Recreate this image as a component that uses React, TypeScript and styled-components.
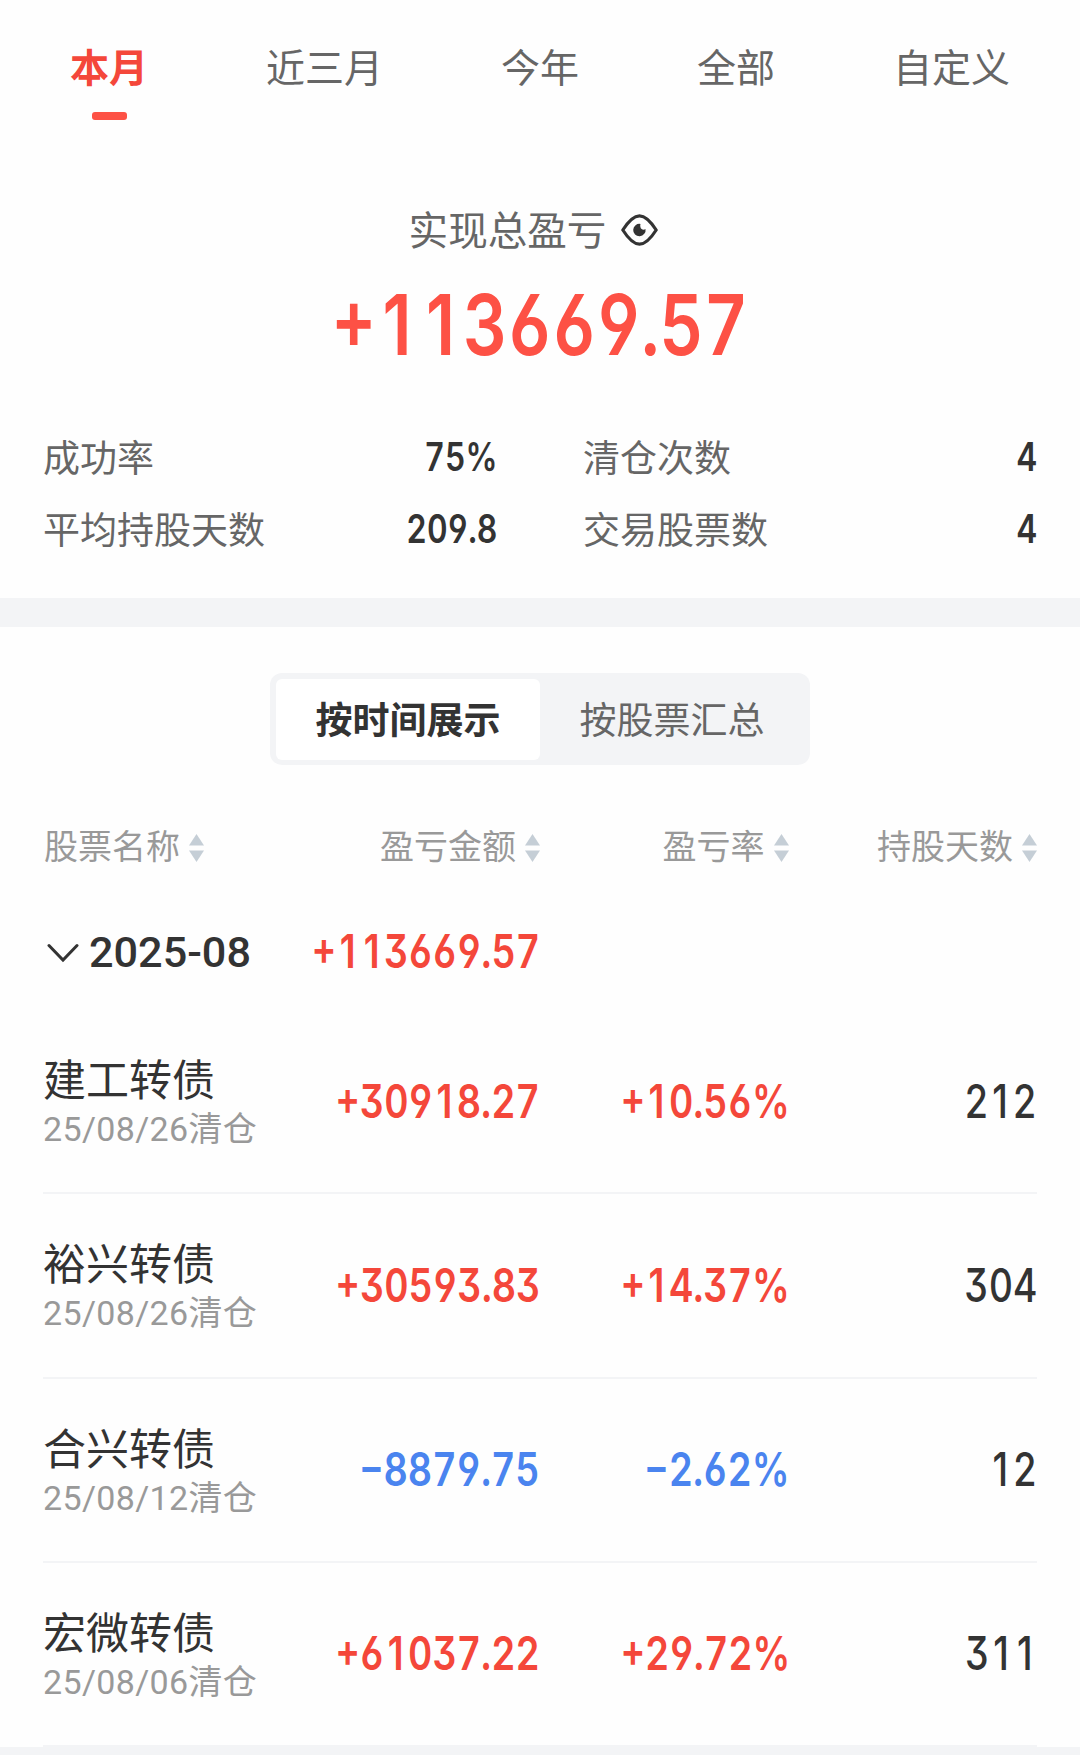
import React, { useState } from 'react';
import styled, { createGlobalStyle } from 'styled-components';

const GlobalStyle = createGlobalStyle`
  *, *::before, *::after { box-sizing: border-box; }
  body {
    margin: 0;
    background: #fefefe;
    color: #333;
    font-family: Roboto, "Noto Sans CJK SC", sans-serif;
  }
`;

const RED = '#f4473a';
const BLUE = '#4a84ef';

const Page = styled.main`
  width: 1080px;
  height: 1755px;
  overflow: hidden;
  display: flex;
  flex-direction: column;
  & > * { flex-shrink: 0; }
`;

const Tabs = styled.nav`
  display: flex;
  justify-content: space-between;
  align-items: flex-start;
  height: 190px;
  padding: 39px 70px 0;
`;

const Tab = styled.button<{ $active: boolean }>`
  display: flex;
  flex-direction: column;
  align-items: center;
  border: 0;
  padding: 0;
  background: none;
  font: inherit;
  font-size: 39px;
  line-height: 60px;
  font-weight: ${(p) => (p.$active ? 700 : 400)};
  color: ${(p) => (p.$active ? RED : '#666')};
  &::after {
    content: '';
    width: 35px;
    height: 8px;
    margin-top: 13px;
    border-radius: 3px;
    background: ${(p) => (p.$active ? '#fd5145' : 'transparent')};
  }
`;

const Total = styled.section`
  display: flex;
  flex-direction: column;
  align-items: center;
  height: 231px;
`;

const TotalLabel = styled.div`
  display: flex;
  align-items: center;
  gap: 15px;
  height: 80px;
  margin-bottom: 5px;
  padding-right: 13px;
  font-size: 39.6px;
  color: #666;
  span { margin-top: -5px; }
`;

const Num = styled.span<{ $size: number; $weight?: number; $color?: string; $flat?: boolean; $origin?: string }>`
  display: inline-block;
  font-family: Inter, Roboto, sans-serif;
  font-size: ${(p) => p.$size}px;
  line-height: 1.2;
  font-weight: ${(p) => p.$weight ?? 600};
  font-feature-settings: 'tnum', 'case', 'cv03', 'cv04'${(p) => (p.$flat ? ", 'cv09'" : '')};
  color: ${(p) => p.$color ?? '#333'};
  white-space: nowrap;
  transform: scaleX(0.818);
  transform-origin: ${(p) => p.$origin ?? 'right'} center;
`;

/* The tabular "1" has a foot; the proportional one is centred in a digit-wide cell instead. */
const One = styled.span`
  display: inline-block;
  width: 0.635em;
  padding-right: 0.02em;
  text-align: center;
  font-feature-settings: 'tnum' 0;
`;

const Digits = ({ text }: { text: string }) => (
  <>{text.split(/(1)/).map((part, i) => (part === '1' ? <One key={i}>1</One> : part))}</>
);

const Stats = styled.dl`
  display: grid;
  grid-template-columns: 453px 453px;
  grid-auto-rows: 72px;
  column-gap: 87px;
  height: 177px;
  margin: 0;
  padding: 0 43px;
`;

const Stat = styled.div`
  display: flex;
  justify-content: space-between;
  align-items: center;
`;

const StatLabel = styled.dt`
  margin-top: -2px;
  font-size: 37px;
  color: #666;
`;

const StatValue = styled.dd`
  margin: 1px -1.5px 0 0;
  display: flex;
`;

const Band = styled.div`
  height: 29px;
  background: #f3f4f6;
`;

const Segment = styled.div`
  display: flex;
  align-self: center;
  width: 540px;
  height: 92px;
  margin: 46px 0 45px;
  padding: 6px 6px 5px;
  border-radius: 12px;
  background: #f3f4f6;
`;

const SegmentButton = styled.button<{ $active: boolean }>`
  flex: 1;
  border: 0;
  padding: 0 0 4px;
  border-radius: 6px;
  font: inherit;
  font-size: 37px;
  font-weight: ${(p) => (p.$active ? 700 : 400)};
  color: ${(p) => (p.$active ? '#333' : '#666')};
  background: ${(p) => (p.$active ? '#fff' : 'transparent')};
`;

const rowGrid = `
  display: grid;
  grid-template-columns: 249px 248px 248.5px 248.5px;
  align-items: center;
  margin: 0 43px;
`;

const HeaderRow = styled.div`
  ${rowGrid}
  height: 72px;
  padding-top: 1px;
`;

const HeaderCell = styled.div<{ $left?: boolean }>`
  display: flex;
  align-items: center;
  justify-content: ${(p) => (p.$left ? 'flex-start' : 'flex-end')};
  gap: 9px;
  padding-left: ${(p) => (p.$left ? 1 : 0)}px;
  font-size: 34px;
  line-height: 50px;
  color: #999;
  svg { margin-top: 3px; }
`;

const GroupRow = styled.div`
  ${rowGrid}
  height: 128px;
  padding-top: 11px;
`;

const GroupName = styled.div`
  display: flex;
  align-items: center;
  gap: 10px;
  padding: 1px 0 0 4px;
  white-space: nowrap;
  font-size: 43.200px;
  font-weight: 500;
  svg { margin-top: 2px; }
`;

const Cell = styled.div<{ $shift?: number }>`
  display: flex;
  justify-content: flex-end;
  margin-right: ${(p) => -(p.$shift ?? 0)}px;
`;

const StockRow = styled.div`
  ${rowGrid}
  height: 184.25px;
  border-bottom: 2px solid #f3f4f6;
`;

const StockName = styled.div`
  padding-top: 2px;
  font-size: 43px;
  line-height: 56px;
`;

const StockNote = styled.div`
  margin-top: -1px;
  padding-bottom: 1px;
  font-size: 34px;
  line-height: 42px;
  letter-spacing: 0.35px;
  color: #999;
  white-space: nowrap;
`;

const EyeIcon = () => (
  <svg width="37" height="32" viewBox="0 0 37 32" fill="none">
    <path
      d="M1.8 16C5 11 11 1.800 18.500 1.800S32 11 35.200 16C32 21 26 30.200 18.500 30.200S5 21 1.800 16Z"
      stroke="#333"
      strokeWidth="3.2"
      strokeLinejoin="round"
    />
    <path d="M19.500 9.900a6.200 6.200 0 1 0 5 5c-1 .900-2.700 1-3.900.1s-1.700-3.500-1.100-5.100Z" fill="#333" />
  </svg>
);

const SortIcon = () => (
  <svg width="15" height="28" viewBox="0 0 15 28" fill="#c5ced6">
    <path d="M7.500 0L15 11.500H0Z" />
    <path d="M0 16.500H15L7.500 28Z" />
  </svg>
);

const ChevronIcon = () => (
  <svg width="32" height="20" viewBox="0 0 32 20" fill="none">
    <path d="M2 2.500L16 17L30 2.500" stroke="#333" strokeWidth="3" strokeLinecap="round" />
  </svg>
);

const TABS = ['本月', '近三月', '今年', '全部', '自定义'];
const STATS = [
  ['成功率', '75%'],
  ['清仓次数', '4'],
  ['平均持股天数', '209.8'],
  ['交易股票数', '4'],
];
const HEADERS = ['股票名称', '盈亏金额', '盈亏率', '持股天数'];
const STOCKS = [
  { name: '建工转债', note: '25/08/26清仓', amount: '+30918.27', rate: '+10.56%', days: '212' },
  { name: '裕兴转债', note: '25/08/26清仓', amount: '+30593.83', rate: '+14.37%', days: '304' },
  { name: '合兴转债', note: '25/08/12清仓', amount: '−8879.75', rate: '−2.62%', days: '12' },
  { name: '宏微转债', note: '25/08/06清仓', amount: '+61037.22', rate: '+29.72%', days: '311' },
];

export default function App() {
  const [tab, setTab] = useState(0);
  const [mode, setMode] = useState(0);
  return (
    <Page>
      <GlobalStyle />
      <Tabs>
        {TABS.map((t, i) => (
          <Tab key={t} $active={i === tab} onClick={() => setTab(i)}>
            {t}
          </Tab>
        ))}
      </Tabs>
      <Total>
        <TotalLabel>
          <span>实现总盈亏</span>
          <EyeIcon />
        </TotalLabel>
        <Num $size={84} $color="#fd5145" $origin="center"><Digits text="+113669.57" /></Num>
      </Total>
      <Stats>
        {STATS.map(([label, value]) => (
          <Stat key={label}>
            <StatLabel>{label}</StatLabel>
            <StatValue>
              <Num $size={39}>{value}</Num>
            </StatValue>
          </Stat>
        ))}
      </Stats>
      <Band />
      <Segment>
        {['按时间展示', '按股票汇总'].map((t, i) => (
          <SegmentButton key={t} $active={i === mode} onClick={() => setMode(i)}>
            {t}
          </SegmentButton>
        ))}
      </Segment>
      <HeaderRow>
        {HEADERS.map((h, i) => (
          <HeaderCell key={h} $left={i === 0}>
            {h}
            <SortIcon />
          </HeaderCell>
        ))}
      </HeaderRow>
      <GroupRow>
        <GroupName>
          <ChevronIcon />
          2025-08
        </GroupName>
        <Cell>
          <Num $size={46} $color={RED} $flat><Digits text="+113669.57" /></Num>
        </Cell>
      </GroupRow>
      {STOCKS.map((s) => {
        const color = s.amount.startsWith('+') ? RED : BLUE;
        return (
          <StockRow key={s.name}>
            <div>
              <StockName>{s.name}</StockName>
              <StockNote>{s.note}</StockNote>
            </div>
            <Cell>
              <Num $size={46} $color={color} $flat><Digits text={s.amount} /></Num>
            </Cell>
            <Cell $shift={1.5}>
              <Num $size={46} $color={color} $flat><Digits text={s.rate} /></Num>
            </Cell>
            <Cell>
              <Num $size={46} $weight={500} $flat><Digits text={s.days} /></Num>
            </Cell>
          </StockRow>
        );
      })}
      <Band />
    </Page>
  );
}
